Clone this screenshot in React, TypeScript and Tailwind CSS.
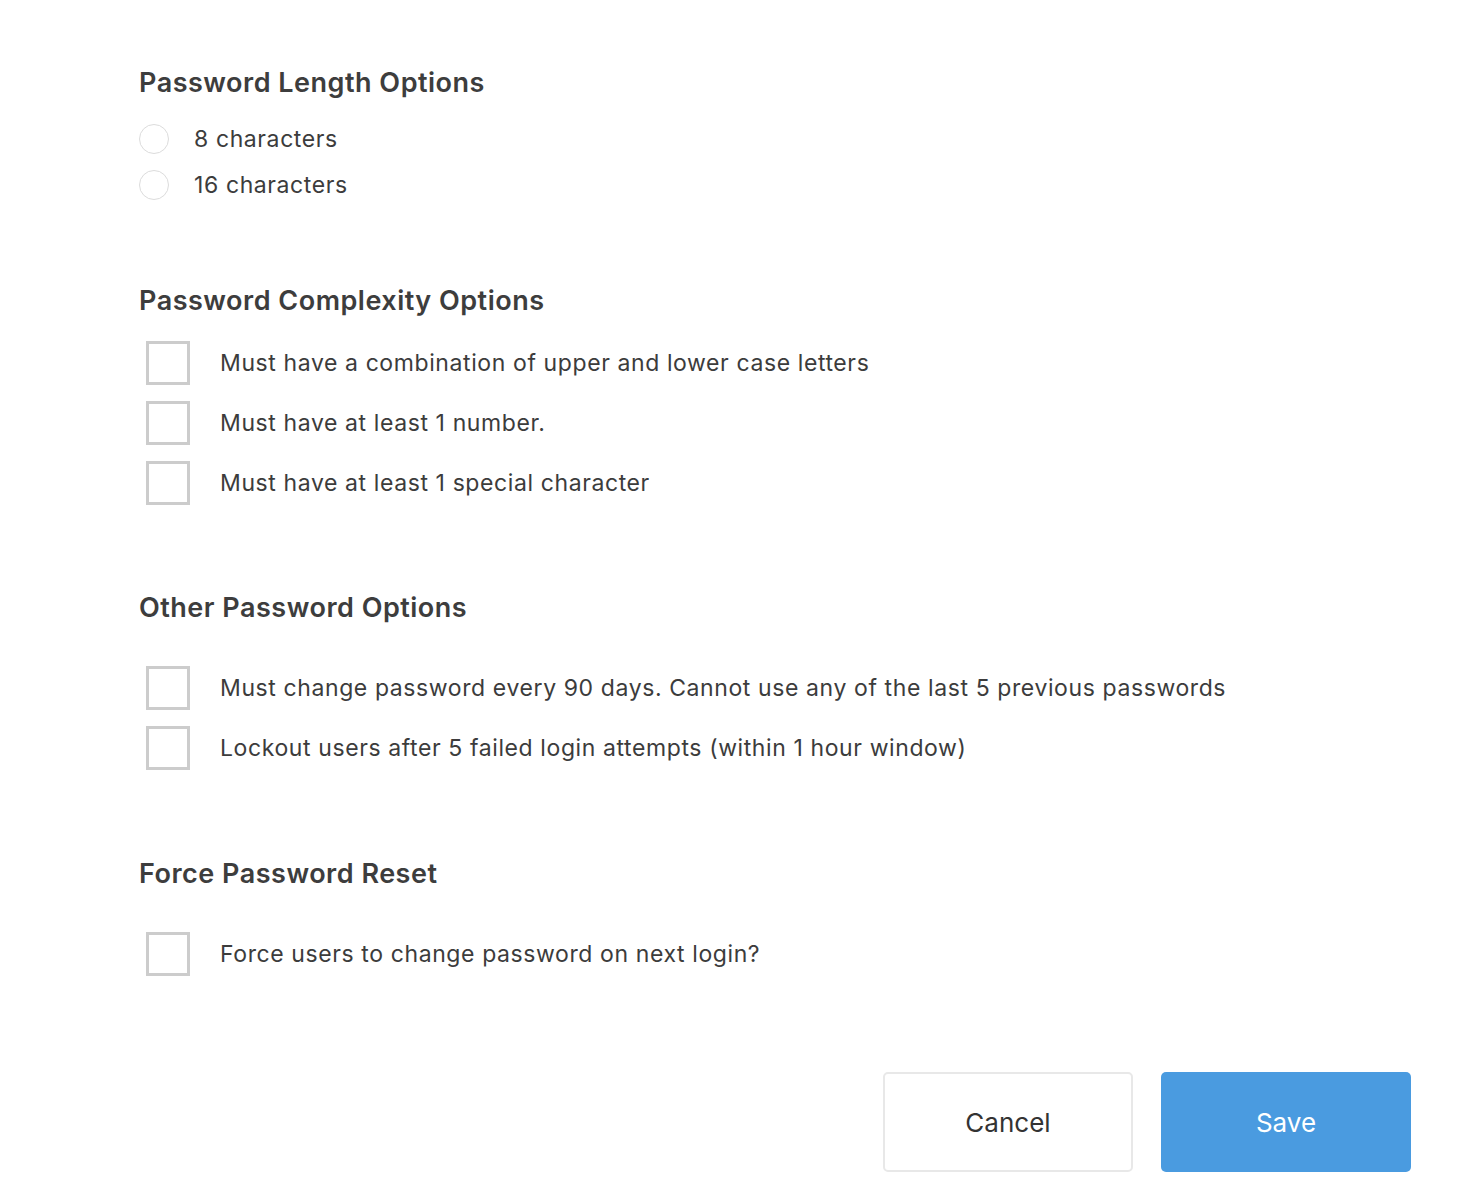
import React, { useState } from 'react';

const font = { fontFamily: '"Inter", "Noto Sans", sans-serif' };

function Radio({ label, checked, onClick }: { label: string; checked: boolean; onClick: () => void }) {
  return (
    <label className="flex items-center h-[46px] cursor-pointer" onClick={onClick}>
      <span className="w-[30px] h-[30px] rounded-full border border-[#dcdcdc] bg-white flex items-center justify-center shrink-0">
        {checked && <span className="w-[14px] h-[14px] rounded-full bg-[#4a9be0]" />}
      </span>
      <span className="ml-[25px] text-[23px] tracking-[0.6px] text-[#3c3c3c]">{label}</span>
    </label>
  );
}

function Check({ label, checked, onClick }: { label: string; checked: boolean; onClick: () => void }) {
  return (
    <label className="flex items-center h-[60px] cursor-pointer" onClick={onClick}>
      <span className="ml-[7px] w-[44px] h-[44px] border-[3px] border-[#cccccc] bg-white shrink-0 flex items-center justify-center">
        {checked && <span className="text-[#4a9be0] text-2xl">✓</span>}
      </span>
      <span className="ml-[30px] text-[23px] tracking-[0.6px] text-[#3c3c3c]">{label}</span>
    </label>
  );
}

function Heading({ children }: { children: React.ReactNode }) {
  return <h2 className="text-[27px] font-semibold tracking-[0.5px] text-[#3d3d3d] leading-none">{children}</h2>;
}

export default function App() {
  const [length, setLength] = useState<number | null>(null);
  const [checks, setChecks] = useState<Record<string, boolean>>({});
  const toggle = (k: string) => setChecks((c) => ({ ...c, [k]: !c[k] }));

  return (
    <div className="min-h-screen bg-white" style={font}>
      <div className="pl-[139px] pr-[69px] pt-[69px] pb-[28px]">
        <Heading>Password Length Options</Heading>
        <div className="mt-[20px]">
          <Radio label="8 characters" checked={length === 8} onClick={() => setLength(8)} />
          <Radio label="16 characters" checked={length === 16} onClick={() => setLength(16)} />
        </div>

        <div className="mt-[79px]">
          <Heading>Password Complexity Options</Heading>
        </div>
        <div className="mt-[19px]">
          <Check label="Must have a combination of upper and lower case letters" checked={!!checks.a} onClick={() => toggle('a')} />
          <Check label="Must have at least 1 number." checked={!!checks.b} onClick={() => toggle('b')} />
          <Check label="Must have at least 1 special character" checked={!!checks.c} onClick={() => toggle('c')} />
        </div>

        <div className="mt-[81px]">
          <Heading>Other Password Options</Heading>
        </div>
        <div className="mt-[37px]">
          <Check label="Must change password every 90 days. Cannot use any of the last 5 previous passwords" checked={!!checks.d} onClick={() => toggle('d')} />
          <Check label="Lockout users after 5 failed login attempts (within 1 hour window)" checked={!!checks.e} onClick={() => toggle('e')} />
        </div>

        <div className="mt-[82px]">
          <Heading>Force Password Reset</Heading>
        </div>
        <div className="mt-[37px]">
          <Check label="Force users to change password on next login?" checked={!!checks.f} onClick={() => toggle('f')} />
        </div>

        <div className="mt-[88px] flex justify-end gap-[28px]">
          <button className="w-[250px] h-[100px] rounded-[5px] border-2 border-[#e8e8e8] bg-white text-[26px] text-[#333]">
            Cancel
          </button>
          <button className="w-[250px] h-[100px] rounded-[5px] bg-[#4a9be0] text-[26px] text-white">
            Save
          </button>
        </div>
      </div>
    </div>
  );
}
